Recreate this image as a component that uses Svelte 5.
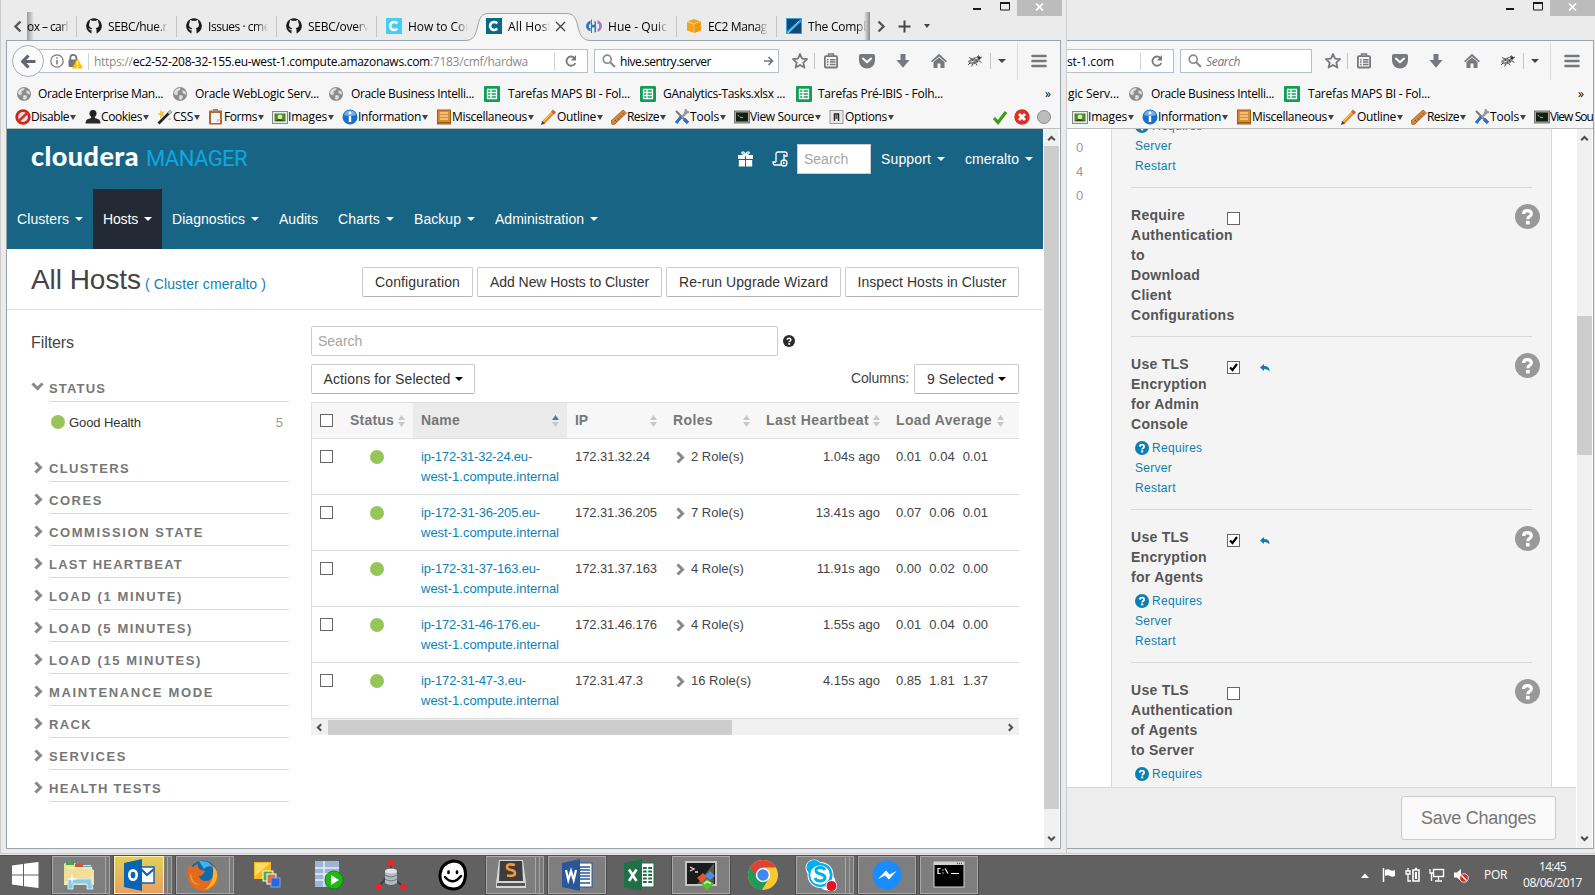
<script>
  // Spreads a label's letters so that it fills the given width in pixels.
  function fit(node, width) {
    const natural = node.getBoundingClientRect().width;
    const count = Math.max(1, node.textContent.length);
    node.style.letterSpacing = (width - natural) / count + 'px';
  }

  const tabs = [
    { icon: 'github', label: 'SEBC/hue.r', w: 59 },
    { icon: 'github', label: 'Issues · cme', w: 62 },
    { icon: 'github', label: 'SEBC/overv', w: 61 },
    { icon: 'cyan', label: 'How to Cor', w: 62 },
    { icon: 'teal', label: 'All Host', w: 44, active: true },
    { icon: 'hue', label: 'Hue - Quic', w: 59 },
    { icon: 'ec2', label: 'EC2 Manag', w: 59 },
    { icon: 'compl', label: 'The Compl', w: 58 }
  ];

  const bookmarks = [
    { icon: 'globe', label: 'Oracle Enterprise Man...', w: 125, gap: 6 },
    { icon: 'globe', label: 'Oracle WebLogic Serv...', w: 124, gap: 7 },
    { icon: 'globe', label: 'Oracle Business Intelli...', w: 123, gap: 7 },
    { icon: 'sheet', label: 'Tarefas MAPS BI - Fol...', w: 122, gap: 8 },
    { icon: 'sheet', label: 'GAnalytics-Tasks.xlsx ...', w: 122, gap: 7 },
    { icon: 'sheet', label: 'Tarefas Pré-IBIS - Folh...', w: 125, gap: 6 }
  ];

  const tools = [
    { icon: 'disable', label: 'Disable', w: 38, slot: 70 },
    { icon: 'cookies', label: 'Cookies', w: 41, slot: 72 },
    { icon: 'css', label: 'CSS', w: 20, slot: 51 },
    { icon: 'forms', label: 'Forms', w: 33, slot: 64 },
    { icon: 'images', label: 'Images', w: 39, slot: 70 },
    { icon: 'info', label: 'Information', w: 63, slot: 94 },
    { icon: 'misc', label: 'Miscellaneous', w: 75, slot: 105 },
    { icon: 'outline', label: 'Outline', w: 39, slot: 70 },
    { icon: 'resize', label: 'Resize', w: 32, slot: 63 },
    { icon: 'tools', label: 'Tools', w: 29, slot: 60 },
    { icon: 'source', label: 'View Source', w: 64, slot: 95 },
    { icon: 'options', label: 'Options', w: 42, slot: 74 }
  ];

  const menu = [
    { label: 'Clusters', w: 52, slot: 86, caret: true },
    { label: 'Hosts', w: 35, slot: 69, caret: true, active: true },
    { label: 'Diagnostics', w: 73, slot: 107, caret: true },
    { label: 'Audits', w: 39, slot: 59 },
    { label: 'Charts', w: 42, slot: 76, caret: true },
    { label: 'Backup', w: 47, slot: 81, caret: true },
    { label: 'Administration', w: 89, slot: 123, caret: true }
  ];

  const actions = [
    { label: 'Configuration', w: 85, slot: 111 },
    { label: 'Add New Hosts to Cluster', w: 159, slot: 185 },
    { label: 'Re-run Upgrade Wizard', w: 149, slot: 175 },
    { label: 'Inspect Hosts in Cluster', w: 149, slot: 174 }
  ];

  const filters = [
    ['CLUSTERS', 81], ['CORES', 54], ['COMMISSION STATE', 155], ['LAST HEARTBEAT', 134],
    ['LOAD (1 MINUTE)', 134], ['LOAD (5 MINUTES)', 144], ['LOAD (15 MINUTES)', 153],
    ['MAINTENANCE MODE', 165], ['RACK', 43], ['SERVICES', 78], ['HEALTH TESTS', 113]
  ];

  const hosts = [
    { name: 'ip-172-31-32-24.eu-', w: 111, ip: '172.31.32.24', ipw: 75, roles: '2 Role(s)', beat: '1.04s ago', load: ['0.01', '0.04', '0.01'] },
    { name: 'ip-172-31-36-205.eu-', w: 119, ip: '172.31.36.205', ipw: 82, roles: '7 Role(s)', beat: '13.41s ago', load: ['0.07', '0.06', '0.01'] },
    { name: 'ip-172-31-37-163.eu-', w: 119, ip: '172.31.37.163', ipw: 82, roles: '4 Role(s)', beat: '11.91s ago', load: ['0.00', '0.02', '0.00'] },
    { name: 'ip-172-31-46-176.eu-', w: 119, ip: '172.31.46.176', ipw: 82, roles: '4 Role(s)', beat: '1.55s ago', load: ['0.01', '0.04', '0.00'] },
    { name: 'ip-172-31-47-3.eu-', w: 105, ip: '172.31.47.3', ipw: 68, roles: '16 Role(s)', beat: '4.15s ago', load: ['0.85', '1.81', '1.37'] }
  ];

  const settings = [
    { lines: ['Require', 'Authentication', 'to', 'Download', 'Client', 'Configurations'], on: false, restart: false },
    { lines: ['Use TLS', 'Encryption', 'for Admin', 'Console'], on: true, restart: true },
    { lines: ['Use TLS', 'Encryption', 'for Agents'], on: true, restart: true },
    { lines: ['Use TLS', 'Authentication', 'of Agents', 'to Server'], on: false, restart: true }
  ];

  const apps = [
    { icon: 'explorer', frame: true, stack: 1 },
    { icon: 'outlook', frame: true, stack: 2, gold: true },
    { icon: 'firefox', frame: true, stack: 1 },
    { icon: 'squares' }, { icon: 'table' }, { icon: 'cluster' }, { icon: 'smile' },
    { icon: 'sublime', frame: true, stack: 2 },
    { icon: 'word', frame: true }, { icon: 'excel' },
    { icon: 'putty', frame: true }, { icon: 'chrome' },
    { icon: 'skype', frame: true, stack: 2 },
    { icon: 'messenger', frame: true },
    { icon: 'cmd', frame: true }
  ];
</script>

{#snippet controls()}
  <div class="controls">
    <svg width="45" height="16" viewBox="0 0 45 16"><path d="M1 9h8" stroke="#1a1a1a" stroke-width="2" /><path d="M28.500 3h9v7h-9z" fill="none" stroke="#1a1a1a" /><path d="M28 3h10" stroke="#1a1a1a" stroke-width="2" /></svg>
    <span class="close"><svg width="9" height="8" viewBox="0 0 9 8"><path d="M1 .5l7 7M8 .5l-7 7" stroke="#fff" stroke-width="1.700" /></svg></span>
  </div>
{/snippet}

{#snippet reload()}
  <svg width="14" height="14" viewBox="0 0 14 14"><path d="M10.500 4A4.600 4.600 0 1 0 11.300 9" fill="none" stroke="#77797c" stroke-width="1.800" /><path d="M12 1v5.500H6.800z" fill="#77797c" /></svg>
{/snippet}

{#snippet glass()}
  <svg width="14" height="14" viewBox="0 0 14 14"><circle cx="5.200" cy="5.200" r="4" fill="none" stroke="#8d8d8d" stroke-width="1.700" /><path d="M8.200 8.200l4.800 4.800" stroke="#8d8d8d" stroke-width="2.200" /></svg>
{/snippet}

{#snippet navicons()}
  <div class="navicons">
    <span style="width:28px"><svg width="18" height="18" viewBox="0 0 18 18"><path d="M9 2l2.100 4.700 5 .5-3.800 3.400 1.100 5L9 13l-4.400 2.600 1.100-5L1.900 7.200l5-.5z" fill="none" stroke="#75787c" stroke-width="1.800" stroke-linejoin="round" /></svg></span>
    <i class="bar"></i>
    <span class="clip"><svg width="16" height="16" viewBox="0 0 16 16"><rect x="1.900" y="3.200" width="12.200" height="11.300" rx="1" fill="none" stroke="#75787c" stroke-width="1.800" /><path d="M5.500 3V1h5v2M4 6.700h1.500M7 6.700h5.500M4 9h1.500M7 9h5.500M4 11.500h1.500M7 11.500h5.500" fill="none" stroke="#75787c" stroke-width="1.400" /></svg></span>
    <span style="width:38px"><svg width="18" height="16" viewBox="0 0 18 16"><path d="M3 1h12q2 0 2 2v4.500a8 8 0 0 1-16 0V3q0-2 2-2z" fill="#75787c" /><path d="M5 5.500l4 3.800 4-3.800" fill="none" stroke="#fff" stroke-width="2" stroke-linecap="round" stroke-linejoin="round" /></svg></span>
    <span style="width:34px"><svg width="16" height="16" viewBox="0 0 16 16"><path d="M5.500 1h5v6h4L8 14.800 1.500 7h4z" fill="#75787c" /></svg></span>
    <span style="width:38px"><svg width="16" height="16" viewBox="0 0 16 16"><path d="M0 8.300L8 .8l8 7.500-1.200 1L8 3.500 1.200 9.300z" fill="#75787c" /><path d="M2.500 9L8 4.500 13.500 9v6H9.500v-4.500h-3V15h-4z" fill="#75787c" /></svg></span>
    <span style="width:32px"><svg width="17" height="14" viewBox="0 0 17 14"><path d="M2 7l3-2 3-1.500 4-1 3 1-1 2-2 3-3 1.500-3 .5-3-1z" fill="#8a8a8a" /><path d="M3 3.500l4 2M8.500 4l3 4M6 5.500l3 4M11 3l2-1.500M14 4l2-1M13 7l2.500 1.500M4 9l-2 2M7 10l-1.500 2.500M10 9.500l1 2" stroke="#333" stroke-width=".8" /><path d="M9 5l3-1M5 8l3-1" stroke="#eee" /><circle cx="13" cy="3.800" r="1.500" fill="#333" /></svg></span>
    <i class="bar"></i>
    <span class="drop"><b class="tri"></b></span>
    <i class="bar tall"></i>
    <span style="width:42px"><svg width="16" height="14" viewBox="0 0 16 14"><path d="M1.500 2h13M1.500 7h13M1.500 12h13" stroke="#75787c" stroke-width="2.600" stroke-linecap="round" /></svg></span>
  </div>
{/snippet}

{#snippet small(name)}
  <svg width="16" height="16" viewBox="0 0 16 16">
    {#if name === 'github'}
      <path d="M8 .2A7.800 7.800 0 0 0 5.500 15.400V12.300C3.300 12.500 3.500 11 2.300 10.200 3.800 9.900 4.200 11.600 5.600 11.200 5.700 10.600 6 10.300 6.200 10.100 4 9.800 3 8.700 3 6.400 3 5.500 3.400 4.700 3.900 4.200 3.700 3.400 3.800 2.600 4.100 2 5 2.100 5.700 2.500 6.300 2.900 7.400 2.700 8.600 2.700 9.700 2.900 10.300 2.500 11 2.100 11.900 2 12.200 2.600 12.300 3.400 12.100 4.200 12.600 4.700 13 5.500 13 6.400 13 8.700 12 9.800 9.800 10.100 10.400 10.600 10.500 11.300 10.500 12V15.400A7.800 7.800 0 0 0 8 .2z" fill="#1b1b1b" />
    {:else if name === 'cyan' || name === 'teal'}
      <rect width="16" height="16" fill={name === 'cyan' ? '#45cdf8' : '#056a86'} /><path d="M11.200 5.500A4 4 0 1 0 11.200 10.500" fill="none" stroke="#fff" stroke-width="2.600" />
    {:else if name === 'hue'}
      <path d="M4.500 2.500Q0 4.500 0 8t4.500 5.500V10H3V6.500h1.500zM6 1.500v5.200h2.500V2.500L10 4v10l-1.500.5V9.500H6V15H5V1.500z" fill="#2c7bbf" /><path d="M11.500 2q4.500 2 4.500 6t-4.500 6v-3.500H13V6h-1.500z" fill="#9b7fc0" />
    {:else if name === 'ec2'}
      <path d="M1 3.500L8 1l7 2.500v9L8 15l-7-2.500z" fill="#f6a41c" /><path d="M1 3.500L8 6l7-2.500M8 6v9" stroke="#ffe0a0" fill="none" /><path d="M8 6l7-2.500v9L8 15z" fill="#e08d0b" opacity=".5" />
    {:else if name === 'compl'}
      <rect width="16" height="16" fill="#3aa0d8" /><path d="M1 1h14L1 13z" fill="#0b4a7b" /><path d="M15 4v11H3z" fill="#0b4a7b" /><path d="M2 15L13 3" stroke="#8fd2f4" />
    {:else if name === 'globe'}
      <circle cx="8" cy="8" r="7" fill="#8d8d8d" /><path d="M3.500 3.500Q6 1.500 8.500 2L8 4 5.500 5.500 6 8 4 9.500 2 7.500q0-2 1.500-4zM7.500 9l3 .5.5 2-2 2.500-2-1zM10.500 4l3 1.500.5 3-2-.5-1.500-1.500z" fill="#dedede" />
    {:else if name === 'sheet'}
      <rect width="16" height="16" rx="1.300" fill="#0f9d58" /><path d="M3.500 3.500h9v9h-9zM3.500 6.500h9M3.500 9.500h9M7 3.500v9" fill="none" stroke="#fff" stroke-width="1.300" />
    {:else if name === 'disable'}
      <circle cx="8" cy="8" r="6.300" fill="#f3e5e3" stroke="#c62a1b" stroke-width="2.800" /><path d="M3.500 12.300l9-8.600" stroke="#d5382a" stroke-width="2.800" />
    {:else if name === 'cookies'}
      <circle cx="8" cy="4.500" r="3.500" fill="#222" /><path d="M6 7h4v2l4 1.500q1.500 1 1.500 4H.5q0-3 1.500-4L6 9z" fill="#2a2a2a" />
    {:else if name === 'css'}
      <path d="M1.500 14.500L14 2" stroke="#222" stroke-width="2.600" /><path d="M11.500 4.500L14 2" stroke="#ccc" stroke-width="2" /><path d="M4 0l1 3 3-1-2 3 2 2-3 0-2 3 0-4-3-1 3-1z" fill="#f4c430" /><path d="M13 8l1 3-3 0z" fill="#f4c430" />
    {:else if name === 'forms'}
      <rect x="1" y="1.500" width="13" height="14" rx="1" fill="#b2652c" /><path d="M3 4h9v10H3z" fill="#f4f4f4" /><rect x="5" y="0" width="5" height="3.500" fill="#888" /><path d="M9 14v-4h4" fill="#ccc" />
    {:else if name === 'images'}
      <rect x=".5" y="2.500" width="15" height="12" fill="#eee" stroke="#888" /><rect x="2.500" y="4.500" width="11" height="8" fill="#4e8c2b" /><circle cx="8" cy="8" r="2.400" fill="#dfe8b0" /><path d="M3 12l4-2 6 2z" fill="#274d16" />
    {:else if name === 'info'}
      <circle cx="8" cy="8" r="7.500" fill="#1f6fc4" /><path d="M2 6a6.300 6.300 0 0 1 12 0q-6 2-12 0z" fill="#6fb0ec" /><path d="M8 7v6" stroke="#fff" stroke-width="2.400" /><circle cx="8" cy="4" r="1.400" fill="#fff" />
    {:else if name === 'misc'}
      <rect x="1.500" y="1" width="13" height="14" fill="#d98b34" stroke="#9a5a17" /><path d="M4 4h8M4 7h8M4 10h8" stroke="#f7d08c" stroke-width="1.500" /><path d="M2 13.500h12" stroke="#9a5a17" />
    {:else if name === 'outline'}
      <path d="M2 14L12.500 3" stroke="#e88a22" stroke-width="3.600" /><path d="M2.500 12.500L11 3.500" stroke="#ffd27a" /><path d="M11.500 4l2-2.200" stroke="#e05a4e" stroke-width="4" /><path d="M0 16l1-4 3 2.500z" fill="#444" />
    {:else if name === 'resize'}
      <path d="M1 15.500L0 12 12 1l3.500 3L4 15z" fill="#d4883f" stroke="#a05c1e" stroke-width=".8" /><path d="M4 11l1.500 1.500M6.500 9L8 10.500M9 6.500L10.500 8M11.500 4L13 5.500" stroke="#7a4312" />
    {:else if name === 'tools'}
      <path d="M2 2l9 9" stroke="#777" stroke-width="2" /><path d="M14 2L7 9" stroke="#999" stroke-width="2.400" /><path d="M7 8l-5 6" stroke="#2d6fc2" stroke-width="3" /><path d="M10 10l4 4" stroke="#2d6fc2" stroke-width="3.400" /><path d="M12 0l-1 4 4-1" fill="none" stroke="#999" stroke-width="2" />
    {:else if name === 'source'}
      <rect x=".5" y="2" width="15" height="12" fill="#aaa" stroke="#777" /><rect x="2" y="3.500" width="12" height="9" fill="#12210f" /><path d="M3.500 6l2 1.500M6 8.500h3" stroke="#6c6" fill="none" />
    {:else if name === 'options'}
      <rect x="1" y="1.500" width="13" height="13" fill="#e8e8e8" stroke="#999" /><path d="M5.500 12V5h4v7" fill="#fff" stroke="#222" stroke-width="1.500" /><path d="M7.500 5v5" stroke="#555" stroke-width="2" />
    {/if}
  </svg>
{/snippet}

{#snippet bookmarkRow(list)}
  {#each list as b}
    <div class="bookmark">{@render small(b.icon)}<span class="ui" style="margin-left:{b.gap}px" use:fit={b.w}>{b.label}</span></div>
  {/each}
{/snippet}

{#snippet toolRow(list)}
  {#each list as t}
    <div class="tool" style="width:{t.slot}px">{@render small(t.icon)}<span class="ui" use:fit={t.w}>{t.label}</span><b class="tri dark"></b></div>
  {/each}
{/snippet}

{#snippet arrow(dir)}
  <svg class="arrow" width="9" height="9" viewBox="0 0 9 9"><path d="M1.200 6.200l3.300-3.300 3.300 3.300" fill="none" stroke="#505050" stroke-width="2.100" transform="rotate({dir} 4.500 4.500)" /></svg>
{/snippet}

{#snippet chevron()}
  <svg width="9" height="13" viewBox="0 0 9 13"><path d="M1.500 1.500L6.500 6.500 1.500 11.500" fill="none" stroke="#888" stroke-width="3" /></svg>
{/snippet}

{#snippet sort(up)}
  <svg class="sort" width="7" height="12" viewBox="0 0 7 12"><path d="M0 5L3.500 0 7 5z" fill={up ? '#5f7890' : '#c8c8c8'} /><path d="M0 7L3.500 12 7 7z" fill="#c8c8c8" /></svg>
{/snippet}

{#snippet question(size, color)}
  <svg width={size} height={size} viewBox="0 0 24 24"><circle cx="12" cy="12" r="12" fill={color} /><path d="M8.200 9.600Q8.400 6.300 12 6.300T15.700 9.400Q15.700 11.200 13.800 12.200 12.300 13 12.300 14.600" fill="none" stroke="#fff" stroke-width="3" /><rect x="10.500" y="16.200" width="3.600" height="3.400" fill="#fff" /></svg>
{/snippet}

{#snippet taskIcon(name)}
  <svg width="32" height="32" viewBox="0 0 32 32">
    {#if name === 'explorer'}
      <path d="M2 4h10l2 2h14v4l3 1v15H1V5z" fill="#f0dd8e" /><path d="M3 3h8v3H3z" fill="#3aa655" /><path d="M12 5h8v3h-8z" fill="#c8553d" /><path d="M20 7h9v2h-9z" fill="#58a8d8" /><path d="M3 8h26l2 18H1z" fill="#f7e9ae" /><path d="M3 10h25v12H2z" fill="#edd98a" opacity=".6" /><path d="M5 20h23l2 10h-6v-5H10v5H5z" fill="#8cc9e6" stroke="#cbe9f7" /><path d="M9 14l1 5 5 1-5 1-1 5-1-5-4-1 4-1z" fill="#fff" opacity=".8" />
    {:else if name === 'outlook'}
      <rect x="17" y="8" width="14" height="16" fill="#fff" stroke="#0a64b4" stroke-width="1.500" /><path d="M18 10l6 6 7-6" fill="none" stroke="#0a64b4" stroke-width="2.200" /><path d="M1 4l18-4v32L1 28z" fill="#0a64b4" /><ellipse cx="10" cy="16" rx="3.700" ry="4.700" fill="none" stroke="#fff" stroke-width="2.700" />
    {:else if name === 'firefox'}
      <circle cx="16" cy="16" r="14.500" fill="#0e6bb0" /><path d="M12 2q10-1 14 6-6-2-9 2z" fill="#3fb4e8" /><path d="M3 6q1 2 3 2 3-3 5-3-1 4 3 6l4 1q-2 5-6 5 1 5 7 5 7 0 7-8 1-5-3-9 8 4 8 12A15 15 0 0 1 1 17Q0 10 3 6z" fill="#e66a1c" /><path d="M26 7q5 5 4 12-3 10-13 12Q28 24 26 7z" fill="#f7b32d" /><path d="M4 14q0 9 9 12-9 0-10-9z" fill="#f59d2c" />
    {:else if name === 'squares'}
      <rect x="3" y="3" width="17" height="17" fill="#f9b81c" /><path d="M4 4h15L4 17z" fill="#fddc67" /><rect x="12" y="12" width="10" height="10" fill="#3fb34f" stroke="#fff" /><rect x="16" y="15" width="9" height="10" fill="#ee6a2a" stroke="#fff" /><rect x="20" y="19" width="9" height="9" fill="#2b67dc" stroke="#7aa7f2" />
    {:else if name === 'table'}
      <rect x="2" y="2" width="24" height="26" fill="#9db4d4" /><path d="M2 9h24M2 15h24M2 21h24M11 2v26" stroke="#e5edf8" stroke-width="1.500" /><circle cx="21" cy="21" r="9" fill="#1fb814" stroke="#0c8a08" /><path d="M18 16l8 5-8 5z" fill="#fff" />
    {:else if name === 'cluster'}
      <path d="M16 4v10L3 28M16 18l13 10" stroke="#3b3f46" stroke-width="2" fill="none" /><path d="M10 12v12q6 4 12 0V12z" fill="#b4bcc5" /><ellipse cx="16" cy="12" rx="6" ry="2.400" fill="#dfe5ea" /><path d="M10 16q6 4 12 0M10 20q6 4 12 0" stroke="#6c7680" fill="none" /><circle cx="16" cy="4" r="3.500" fill="#e8262a" /><circle cx="3.500" cy="28" r="3.200" fill="#e8262a" /><circle cx="28.500" cy="28" r="3.200" fill="#e8262a" />
    {:else if name === 'smile'}
      <path d="M16 2q12 0 12.500 13Q28 30 16 30 3 29 3 16 4 4 16 2z" fill="#fff" stroke="#000" stroke-width="3" /><path d="M11.500 12.500v1.500M20 12.500v1.500" stroke="#000" stroke-width="2.600" stroke-linecap="round" /><path d="M8 18q8 9 16-1" fill="none" stroke="#000" stroke-width="2.500" stroke-linecap="round" />
    {:else if name === 'sublime'}
      <path d="M1 24L4 1h24l3 23v5H1z" fill="#d6d6d6" /><path d="M4 22L5 2h22l1 20z" fill="#3d3d3d" /><path d="M2 24h28v3H2z" fill="#555" /><path d="M20 6q-8-2-8 2 0 2.500 4 3t4 3.500q0 3-8 2" fill="none" stroke="#f59a3c" stroke-width="2.600" />
    {:else if name === 'word' || name === 'excel'}
      <rect x="16" y="4" width="15" height="24" fill="#fff" stroke={name === 'word' ? '#2b579a' : '#1e7145'} />
      {#if name === 'word'}
        <path d="M19 8h10M19 11h10M19 14h10M19 17h10M19 20h10M19 24h10" stroke="#2b579a" stroke-width="1.500" />
      {:else}
        <path d="M20 9h9M20 12.500h9M20 16h9M20 19.500h9M20 23h9" stroke="#1e7145" stroke-width="2.200" /><path d="M24.500 6v20" stroke="#fff" stroke-width="1.500" />
      {/if}
      <path d="M1 4l18-4v32L1 28z" fill={name === 'word' ? '#2b579a' : '#1e7145'} />
      {#if name === 'word'}
        <path d="M5 11l2.300 10L10 12l2.700 9L15 11" fill="none" stroke="#fff" stroke-width="2.200" />
      {:else}
        <path d="M6 10.500l7.500 11.500M13.500 10.500L6 22" stroke="#fff" stroke-width="2.600" />
      {/if}
    {:else if name === 'putty'}
      <rect x="1" y="3" width="30" height="23" fill="#1b1b1b" stroke="#c5c5c5" stroke-width="2" /><path d="M12 25L29 4v21z" fill="#555" /><path d="M5 8l4 2-4 2M10 13h3" stroke="#ddd" fill="none" stroke-width="1.300" /><path d="M12 19l6-5 4 4-5 6z" fill="#e8552a" /><path d="M20 17l5-5 5 5-5 4z" fill="#4a8fe0" /><path d="M16 25l6-5 7 5-7 6z" fill="#54c22b" /><path d="M19 25l3-2.500 4 2" stroke="#d6f5a8" stroke-width="1.500" fill="none" />
    {:else if name === 'chrome'}
      <circle cx="16" cy="16" r="15" fill="#fbc834" /><path d="M16 16L3 8.500A15 15 0 0 1 29 8.500L16 8.500z" fill="#db4437" /><path d="M3 8.500l7 11L16 16V8.500z" fill="#db4437" /><path d="M3 8.500A15 15 0 0 0 15 31l6.500-11-8 2z" fill="#219a57" /><circle cx="16" cy="16" r="7.200" fill="#fff" /><circle cx="16" cy="16" r="5.700" fill="#4285f4" />
    {:else if name === 'skype'}
      <circle cx="15.500" cy="16" r="13" fill="#fff" /><circle cx="9" cy="9" r="8.500" fill="#fff" /><circle cx="22" cy="23" r="8.500" fill="#fff" /><circle cx="15.500" cy="16" r="12" fill="#00aff0" /><circle cx="9" cy="8.500" r="7.500" fill="#00aff0" /><circle cx="15" cy="16" r="9.800" fill="#fff" /><path d="M20 11q-2-3-5.500-2.500-4 .5-3.500 3.500.5 2 4.500 3t4.500 3.500q-.5 3.500-5 3.500-4 0-5-3" fill="none" stroke="#00aff0" stroke-width="3" /><circle cx="26.500" cy="27" r="5.500" fill="#e81123" stroke="#fff" />
    {:else if name === 'messenger'}
      <circle cx="16" cy="16" r="14.500" fill="#1b8cff" /><path d="M7 20l8-8.500 3.500 4L25.500 12l-7.500 8.500-4-4z" fill="#fff" />
    {:else if name === 'cmd'}
      <rect x="1" y="3" width="30" height="25" fill="#000" stroke="#cfd3d8" /><path d="M1 4.500h30" stroke="#cfd3d8" stroke-width="3" /><path d="M24 4.500h5" stroke="#555" stroke-dasharray="1 1" stroke-width="1.500" /><path d="M7.500 9.500H5v5h2.500M10 10.500v1M10 13.500v1M12 9.500l3 5M18 14.500h8" fill="none" stroke="#fff" stroke-width="1.200" />
    {/if}
  </svg>
{/snippet}

<main>
  <section class="window hosts-window">
    <div class="titlebar">
      <div class="strip">
        <span class="scroll-left"><svg width="9" height="13" viewBox="0 0 9 13"><path d="M7.500 1.500l-5 5 5 5" fill="none" stroke="#555" stroke-width="2.400" /></svg></span>
        <div class="tab first"><div class="label"><span class="ui" use:fit={41}>ox – carl</span></div></div>
        {#each tabs as t}
          <div class="tab" class:active={t.active}>
            {#if t.active}
              <svg class="curve" width="126" height="29" viewBox="0 0 126 29"><path d="M0 28.500C9 28.500 10.500 23 12.500 15 14.500 6 16 1.500 24 1.500H101C109 1.500 111 6 113 15 115 23 117 28.500 126 28.500V29H0z" fill="#f6f6f6" /><path d="M0 28.500C9 28.500 10.500 23 12.500 15 14.500 6 16 1.500 24 1.500H101C109 1.500 111 6 113 15 115 23 117 28.500 126 28.500" fill="none" stroke="#9aa2ab" /></svg>
            {/if}
            {@render small(t.icon)}
            <div class="label" class:short={t.active}><span class="ui" use:fit={t.w}>{t.label}</span></div>
            {#if t.active}<svg class="x" width="11" height="11" viewBox="0 0 11 11"><path d="M1 1l9 9M10 1l-9 9" stroke="#444" stroke-width="1.300" /></svg>{/if}
          </div>
        {/each}
        <div class="tab-end">
          <svg width="9" height="13" viewBox="0 0 9 13"><path d="M1.500 1.500l5 5-5 5" fill="none" stroke="#555" stroke-width="2.400" /></svg>
          <svg class="plus" width="13" height="13" viewBox="0 0 13 13"><path d="M6.500 .5v12M.5 6.500h12" stroke="#444" stroke-width="2" /></svg>
          <b class="tri dark"></b>
        </div>
      </div>
      {@render controls()}
    </div>

    <div class="frame">
      <div class="nav">
        <div class="url">
          <svg class="info" width="14" height="14" viewBox="0 0 14 14"><circle cx="7" cy="7" r="6.200" fill="none" stroke="#777" stroke-width="1.200" /><path d="M7 6v4.500M7 3.300v1.500" stroke="#777" stroke-width="1.500" /></svg>
          <svg class="lock" width="15" height="15" viewBox="0 0 15 15"><path d="M2.300 6V3.800a3 3 0 0 1 6 0V6" fill="none" stroke="#777" stroke-width="1.800" /><rect x=".5" y="5.500" width="9" height="7.500" rx="1" fill="#777" /><path d="M9.500 4L15 14.500H4z" fill="#ffbf00" /><path d="M9.500 7.500v3.500M9.500 12v1.500" stroke="#fff" stroke-width="1.400" /></svg>
          <i class="bar"></i>
          <span class="ui address" use:fit={434}><em>https://</em>ec2-52-208-32-155.eu-west-1.compute.amazonaws.com<em>:7183/cmf/hardwa</em></span>
          <i class="bar"></i>
          <span class="reload">{@render reload()}</span>
        </div>
        <span class="back"><svg width="15" height="15" viewBox="0 0 15 15"><path d="M7.500 1.500L1.800 7.500 7.500 13.500M2 7.500h12.500" fill="none" stroke="#63666a" stroke-width="3.200" /></svg></span>
        <div class="find">
          {@render glass()}
          <span class="ui" use:fit={91}>hive.sentry.server</span>
          <svg class="go" width="10" height="10" viewBox="0 0 10 10"><path d="M0 5h8M4.500 1l4 4-4 4" fill="none" stroke="#777" stroke-width="1.700" /></svg>
        </div>
        {@render navicons()}
      </div>
      <div class="bookmarks">
        {@render bookmarkRow(bookmarks)}
        <span class="ui more">»</span>
      </div>
      <div class="toolbar">
        {@render toolRow(tools)}
        <div class="badges">
          <svg width="16" height="16" viewBox="0 0 16 16"><path d="M2 9l4 4.500L14 3" fill="none" stroke="#3f9b1e" stroke-width="3.200" /></svg>
          <svg width="16" height="16" viewBox="0 0 16 16"><circle cx="8" cy="8" r="7.700" fill="#dd3024" /><path d="M5 5l6 6M11 5l-6 6" stroke="#fff" stroke-width="2.800" /></svg>
          <svg width="16" height="16" viewBox="0 0 16 16"><circle cx="8" cy="8" r="6.500" fill="#bcbcbc" stroke="#8a8a8a" /></svg>
        </div>
      </div>

      <div class="view">
        <div class="page">
          <header>
            <div class="brand">
              <div class="logo"><strong use:fit={108}>cloudera</strong><span use:fit={101}>MANAGER</span></div>
              <div class="account">
                <svg width="15" height="16" viewBox="0 0 15 16"><path d="M0 4h7v4H0zM8 4h7v4H8zM.8 9H7v6.500H.8zM8 9h6.200v6.500H8z" fill="#fff" /><path d="M7.500 4Q3 3 4 1.200 6 0 7.500 4 9 0 11 1.200 12 3 7.500 4" fill="none" stroke="#fff" stroke-width="1.200" /></svg>
                <svg class="scroll" width="16" height="16" viewBox="0 0 16 16"><path d="M4 11V3q0-2 2-2h7q2 0 2 2v2h-3V3M4 11H1q0 3 2 3h6M12 5v5" fill="none" stroke="#fff" stroke-width="1.300" /><circle cx="12" cy="12" r="3" fill="none" stroke="#fff" stroke-width="1.300" /><path d="M11 10.500l2.500 1.500-2.500 1.500z" fill="#fff" /></svg>
                <span class="search-top">Search</span>
                <span class="menu-link"><span use:fit={50}>Support</span><b class="caret"></b></span>
                <span class="menu-link"><span use:fit={54}>cmeralto</span><b class="caret"></b></span>
              </div>
            </div>
            <nav>
              {#each menu as m}
                <a class:active={m.active} style="width:{m.slot}px"><span use:fit={m.w}>{m.label}</span>{#if m.caret}<b class="caret"></b>{/if}</a>
              {/each}
            </nav>
          </header>

          <div class="heading">
            <h1 use:fit={110}>All Hosts</h1>
            <span class="sub" use:fit={121}>( Cluster cmeralto )</span>
            <div class="buttons">
              {#each actions as a}
                <span class="btn" style="width:{a.slot}px"><span use:fit={a.w}>{a.label}</span></span>
              {/each}
            </div>
          </div>

          <div class="body">
            <aside>
              <h2 use:fit={43}>Filters</h2>
              <div class="group open">
                <svg width="13" height="9" viewBox="0 0 13 9"><path d="M1.500 1.500l5 5 5-5" fill="none" stroke="#888" stroke-width="3" /></svg>
                <div class="group-title"><span use:fit={57}>STATUS</span></div>
              </div>
              <div class="health"><i class="dot"></i><span use:fit={72}>Good Health</span><em>5</em></div>
              {#each filters as [label, w]}
                <div class="group">{@render chevron()}<div class="group-title"><span use:fit={w}>{label}</span></div></div>
              {/each}
            </aside>

            <div class="content">
              <div class="search-row"><span class="field">Search</span>{@render question(12, '#2a2a2a')}</div>
              <div class="pickers">
                <span class="btn" style="width:164px"><span use:fit={127}>Actions for Selected</span><b class="caret black"></b></span>
                <span class="columns"><span use:fit={58}>Columns:</span></span>
                <span class="btn" style="width:105px"><span use:fit={67}>9 Selected</span><b class="caret black"></b></span>
              </div>
              <div class="table">
                <div class="row head">
                  <div><i class="box"></i></div>
                  <div class="status"><span use:fit={44}>Status</span>{@render sort()}</div>
                  <div class="sorted"><span use:fit={39}>Name</span>{@render sort(true)}</div>
                  <div><span use:fit={13}>IP</span>{@render sort()}</div>
                  <div><span use:fit={40}>Roles</span>{@render sort()}</div>
                  <div><span use:fit={103}>Last Heartbeat</span>{@render sort()}</div>
                  <div><span use:fit={96}>Load Average</span>{@render sort()}</div>
                </div>
                {#each hosts as h}
                  <div class="row">
                    <div><i class="box"></i></div>
                    <div class="center"><i class="dot"></i></div>
                    <div class="host"><span use:fit={h.w}>{h.name}</span><br /><span use:fit={138}>west-1.compute.internal</span></div>
                    <div><span use:fit={h.ipw}>{h.ip}</span></div>
                    <div class="roles">{@render chevron()}<span>{h.roles}</span></div>
                    <div class="beat">{h.beat}</div>
                    <div class="load">{#each h.load as l}<span>{l}</span>{/each}</div>
                  </div>
                {/each}
              </div>
              <div class="hscroll">{@render arrow(-90)}<i></i><span></span>{@render arrow(90)}</div>
            </div>
          </div>
        </div>
        <div class="vscroll">{@render arrow(0)}<i style="height:663px"></i><span></span>{@render arrow(180)}</div>
      </div>
    </div>
  </section>

  <section class="window config-window">
    <div class="titlebar">{@render controls()}</div>
    <div class="frame">
      <div class="nav">
        <div class="url">
          <span class="ui" use:fit={47}>st-1.com</span>
          <i class="bar"></i>
          <span class="reload">{@render reload()}</span>
        </div>
        <div class="find">{@render glass()}<span class="ui hint" use:fit={34}>Search</span></div>
        {@render navicons()}
      </div>
      <div class="bookmarks"><span class="ui rest" use:fit={51}>gic Serv...</span>{@render bookmarkRow(bookmarks.slice(2, 4))}<span class="ui more">»</span></div>
      <div class="toolbar">{@render toolRow(tools.slice(4, 10))}{@render small('source')}<span class="ui" use:fit={43}>View Sou</span></div>
      <div class="view">
        <div class="page">
          <div class="settings">
            <div class="counts"><span>0</span><span>4</span><span>0</span></div>
            <div class="panel">
              <div class="restart lead"><span>{@render question(14, '#0b7fb0')} Requires</span><span>Server</span><span>Restart</span></div>
              {#each settings as s}
                <div class="setting">
                  <div class="name">
                    {#each s.lines as line}<span>{line}</span>{/each}
                    {#if s.restart}
                      <div class="restart"><span>{@render question(14, '#0b7fb0')} Requires</span>{#if s !== settings[3]}<span>Server</span><span>Restart</span>{/if}</div>
                    {/if}
                  </div>
                  <i class="box">{#if s.on}<svg width="11" height="11" viewBox="0 0 11 11"><path d="M2 5.500L4.500 8 9 2" fill="none" stroke="#000" stroke-width="2.200" /></svg>{/if}</i>
                  {#if s.on}<svg class="undo" width="10" height="8" viewBox="0 0 10 8"><path d="M0 3.500L4 0v2q6 0 5.500 5.500Q8 5 4 5v2z" fill="#0b7fb0" /></svg>{/if}
                  <span class="help">{@render question(25, '#999')}</span>
                </div>
              {/each}
            </div>
          </div>
          <footer><span class="save"><span use:fit={115}>Save Changes</span></span></footer>
        </div>
        <div class="vscroll">{@render arrow(0)}<u></u><i style="height:139px"></i><span></span>{@render arrow(180)}</div>
      </div>
    </div>
  </section>

  <div class="taskbar">
    <span class="start"><svg width="27" height="26" viewBox="0 0 27 26"><path d="M0 3.500L11 2v10.500H0zM12 1.800L26.500 0v12.500H12zM0 13.500h11V24L0 22.500zM12 13.500h14.500V26L12 24.200z" fill="#fff" /></svg></span>
    {#each apps as a}
      <div class="app">
        <span class="face" class:framed={a.frame} class:gold={a.gold}>{@render taskIcon(a.icon)}</span>
        {#each Array(a.stack ?? 0) as _}<i></i>{/each}
      </div>
    {/each}
    <div class="tray">
      <svg class="up" width="8" height="5" viewBox="0 0 8 5"><path d="M0 5l4-4.500L8 5z" fill="#fff" /></svg>
      <svg width="16" height="16" viewBox="0 0 16 16"><path d="M2.500 1v14" stroke="#fff" stroke-width="1.500" /><path d="M4 3q3-1.500 5 0t5 0v6q-3 1.500-5 0t-5 0z" fill="#fff" /></svg>
      <svg width="16" height="16" viewBox="0 0 16 16"><path d="M3 1v3M1 4h4v3H1zM3 7v7h3" fill="none" stroke="#fff" stroke-width="1.300" /><path d="M8 3h6v11H8zM10 1.500h2" fill="none" stroke="#fff" stroke-width="1.600" /><path d="M10 5h2v7h-2z" fill="#fff" /></svg>
      <svg width="16" height="16" viewBox="0 0 16 16"><rect x="4.500" y="2.500" width="10" height="7" fill="none" stroke="#fff" stroke-width="1.400" /><path d="M9.500 10v3M6 14h7M1 2v4h3M2.500 6v8" stroke="#fff" stroke-width="1.300" fill="none" /></svg>
      <svg width="16" height="16" viewBox="0 0 16 16"><path d="M1 5.500h3L8 2v12l-4-3.500H1z" fill="#fff" /><circle cx="11" cy="11" r="4.300" fill="#d8261c" stroke="#fff" stroke-width=".8" /><path d="M8.500 8.500l5 5" stroke="#fff" stroke-width="1.400" /></svg>
      <span class="ui lang" use:fit={23}>POR</span>
      <div class="clock"><span class="ui" use:fit={27}>14:45</span><span class="ui" use:fit={59}>08/06/2017</span></div>
    </div>
  </div>
</main>

<style>
  :global(body) { margin: 0; }
  main { position: relative; width: 1595px; height: 895px; overflow: hidden; background: #ebebeb; font-family: "Liberation Sans", Arial, sans-serif; font-size: 14px; color: #444; }
  svg { display: block; flex: none; }
  em { font-style: normal; }
  .ui { font-family: "Open Sans", "Noto Sans", sans-serif; font-size: 12px; color: #000; line-height: 16px; white-space: pre; display: inline-block; flex: none; }
  .window { position: absolute; top: 0; height: 854px; background: #ebebeb; box-sizing: border-box; border-bottom: 1px solid #ccc; overflow: hidden; }
  .hosts-window { left: 0; width: 1067px; border-left: 1px solid #ccc; border-right: 1px solid #ccc; padding-left: 5px; }
  .config-window { left: 1067px; width: 528px; }

  .titlebar { display: flex; justify-content: space-between; height: 40px; }
  .controls { display: flex; height: 16px; margin-left: auto; }
  .hosts-window .controls { margin-right: 4px; }
  .close { display: flex; align-items: center; justify-content: center; box-sizing: border-box; width: 45px; height: 16px; background: #bcbcbc; padding: 0 0 2px; }
  .strip { display: flex; align-items: flex-end; height: 40px; }
  .scroll-left { width: 21px; height: 28px; display: flex; align-items: center; justify-content: center; box-sizing: border-box; padding-left: 2px; }
  .tab { position: relative; display: flex; align-items: center; box-sizing: border-box; width: 100px; height: 28px; padding-left: 9px; border-left: 1px solid transparent; }
  .tab::before { content: ''; position: absolute; left: -1px; top: 4px; bottom: 3px; border-left: 1px solid #c4c4c4; }
  .tab.active::before, .tab.active + .tab::before, .tab.first::before { display: none; }
  .tab.first { width: 49px; padding-left: 0; overflow: hidden; background: linear-gradient(90deg, #999, #ebebeb 7px); border: 0; }
  .tab.first .label { width: 42px; margin-left: 0; }
  .tab.active { z-index: 2; }
  .tab svg { position: relative; }
  .tab svg.curve { position: absolute; left: -12px; top: 0; }
  .label { display: flex; width: 60px; margin-left: 6px; padding-top: 1px; overflow: hidden; -webkit-mask-image: linear-gradient(90deg, #000 80%, transparent); mask-image: linear-gradient(90deg, #000 80%, transparent); position: relative; }
  .label.short { width: 42px; }
  .x { margin-left: 5px; }
  .tab-end { display: flex; align-items: center; height: 28px; margin-left: -6px; padding-left: 7px; position: relative; background: #ebebeb; }
  .tab-end::before { content: ''; position: absolute; left: -6px; top: 0; width: 6px; height: 28px; background: linear-gradient(270deg, #888, transparent); }
  .plus { margin: 0 13px 0 12px; }

  .frame { display: flex; flex-direction: column; box-sizing: border-box; height: 809px; border: 1px solid #9aa2ab; background: #f6f6f6; }
  .hosts-window .frame { width: 1055px; }
  .config-window .frame { width: 527px; border-left: 0; }
  .nav { display: flex; align-items: center; height: 40px; position: relative; }
  .url, .find { display: flex; align-items: center; box-sizing: border-box; height: 24px; background: #fff; border: 1px solid #b6bfca; flex: none; }
  .url .ui, .find .ui { padding-top: 1px; }
  .url { width: 552px; margin-left: 29px; padding-left: 13px; }
  .lock { margin-left: 4px; }
  .url .bar { margin: 0 0 0 5px; height: 17px; border-left: 1px solid #d2d2d2; }
  .address { margin-left: 5px; color: #000; }
  .address em { color: #8a8a8a; }
  .url .address + .bar { margin-left: 26px; }
  .reload { margin-left: 9px; }
  .back { position: absolute; left: 5px; top: 4px; width: 30px; height: 30px; border: 1px solid #a7afb8; border-radius: 50%; background: #fafafa; display: flex; align-items: center; justify-content: center; }
  .find { width: 185px; margin-left: 6px; padding-left: 7px; }
  .find .ui { margin-left: 4px; }
  .go { margin-left: auto; margin-right: 4px; }
  .config-window .url { width: 107px; margin-left: 0; padding-left: 0; border-left: 0; }
  .config-window .url .bar { margin-left: 26px; }
  .config-window .find { width: 132px; }
  .find .hint { font-style: italic; color: #777; }
  .navicons { display: flex; align-items: center; margin-left: 7px; flex: none; }
  .navicons span { display: flex; align-items: center; justify-content: center; }
  .navicons .clip { box-sizing: border-box; width: 33px; padding-right: 2px; }
  .navicons .drop { box-sizing: border-box; width: 26px; padding-right: 5px; }
  .bar { display: block; flex: none; width: 0; height: 16px; border-left: 1px solid #c4c4c4; }
  .bar.tall { height: 38px; border-color: #dedede; }
  .tri { display: block; border: 4px solid transparent; border-top-color: #444; border-bottom: 0; }
  .tri.dark { border-width: 4px 3.500px 0; }
  .bookmarks { display: flex; align-items: center; height: 25px; padding-left: 9px; overflow: hidden; }
  .bookmark { display: flex; align-items: center; flex: none; width: 156px; }
  .config-window .bookmarks { padding-left: 1px; }
  .rest { margin-right: 9px; }
  .more { margin-left: auto; margin-right: 9px; }
  .toolbar { display: flex; align-items: center; height: 22px; padding-left: 8px; border-bottom: 1px solid #bdbdbd; overflow: hidden; }
  .config-window .toolbar { padding-left: 5px; }
  .tool { display: flex; align-items: center; flex: none; }
  .tool .tri { margin-left: 1px; border-width: 5px 3.500px 0; }
  .badges { display: flex; gap: 6px; margin-left: auto; margin-right: 8px; }
  .view { display: flex; flex: 1; min-height: 0; background: #fff; }
  .page { display: flex; flex-direction: column; flex: 1; min-width: 0; overflow: hidden; }
  .vscroll { display: flex; flex-direction: column; align-items: center; width: 16px; background: #f0f0f0; padding: 5px 0 5px; box-sizing: border-box; border-left: 1px solid #fff; flex: none; margin-right: 1px; }
  .vscroll i { width: 15px; background: #cdcdcd; margin-top: 3px; flex: none; }
  .vscroll span { flex: 1; }
  .vscroll u { height: 170px; flex: none; }

  header { height: 120px; background: #186484; color: #fff; flex: none; }
  .brand { display: flex; height: 60px; }
  .logo { display: flex; align-items: baseline; padding: 10px 0 0 24px; white-space: nowrap; }
  .logo strong { font: 900 27px/34px Lato, sans-serif; }
  .logo span { font: 400 22px/34px Roboto, sans-serif; color: #10a6df; margin-left: 7px; }
  .logo strong, .logo span { display: inline-block; }
  .account { display: flex; align-items: center; margin-left: auto; margin-right: 10px; height: 60px; }
  .scroll { margin: 0 9px 0 19px; }
  .search-top { width: 74px; height: 30px; box-sizing: border-box; border: 1px solid #ccc; background: #fff; color: #a5a5a5; line-height: 28px; padding-left: 6px; }
  .menu-link { display: flex; align-items: center; margin-left: 10px; white-space: nowrap; }
  .menu-link + .menu-link { margin-left: 20px; }
  .caret { display: block; border: 4px solid transparent; border-top-color: #fff; border-bottom: 0; margin-left: 6px; }
  .caret.black { border-top-color: #000; margin-left: 4px; }
  nav { display: flex; height: 60px; }
  nav a { display: flex; align-items: center; box-sizing: border-box; padding-left: 10px; height: 60px; white-space: nowrap; }
  nav a.active { background: #232a34; }
  .heading { display: flex; align-items: center; box-sizing: border-box; height: 61px; border-bottom: 1px solid #ddd; padding-left: 24px; flex: none; white-space: nowrap; }
  h1 { font-size: 28px; font-weight: 400; margin: 0; line-height: 60px; color: #444; padding-top: 2px; }
  .sub { color: #0f7fb5; margin-left: 4px; line-height: 14px; padding-top: 10px; }
  .buttons { display: flex; gap: 4px; margin-left: auto; margin-right: 24px; padding-top: 5px; }
  .btn { display: flex; align-items: center; justify-content: center; box-sizing: border-box; height: 30px; border: 1px solid #ccc; border-bottom-color: #b3b3b3; border-radius: 2px; background: #fff; color: #333; white-space: nowrap; }
  .body { display: flex; }
  aside { width: 258px; padding: 22px 0 0 24px; margin-right: 22px; box-sizing: content-box; }
  h2 { font-size: 16px; font-weight: 400; line-height: 22px; margin: 0 0 27px; display: inline-block; color: #444; }
  .group { display: flex; height: 32px; padding-left: 3px; align-items: flex-start; box-sizing: border-box; }
  .group > svg { margin-top: 11px; }
  .group.open { padding-left: 0; height: 20px; }
  .group.open > svg { margin-top: 1px; }
  .group-title { box-sizing: border-box; width: 240px; height: 32px; padding-top: 11px; border-bottom: 1px solid #d8d8d8; margin-left: 6px; font-weight: bold; font-size: 13px; line-height: 16px; color: #777; white-space: nowrap; }
  .group.open .group-title { margin-left: 5px; height: 21px; padding-top: 0; }
  .health { display: flex; align-items: center; height: 16px; font-size: 13px; padding: 13px 6px 0 20px; margin-bottom: 20px; width: 232px; color: #333; }
  .health em { margin-left: auto; color: #999; }
  .dot { display: block; width: 14px; height: 14px; border-radius: 50%; background: #96c65a; margin-right: 4px; }
  .content { width: 708px; padding-top: 16px; }
  .search-row { display: flex; align-items: center; gap: 5px; }
  .field { width: 467px; height: 30px; box-sizing: border-box; border: 1px solid #ccc; border-radius: 2px; line-height: 28px; padding-left: 6px; color: #a5a5a5; }
  .pickers { display: flex; align-items: center; margin-top: 8px; white-space: nowrap; }
  .columns { margin-left: auto; margin-right: 5px; padding-bottom: 3px; }
  .table { margin-top: 8px; border-left: 1px solid #ddd; border-top: 1px solid #ddd; font-size: 13px; }
  .row { display: grid; grid-template-columns: 28px 73px 154px 98px 93px 130px 131px; height: 56px; box-sizing: border-box; border-bottom: 1px solid #ddd; line-height: 20px; white-space: nowrap; color: #444; }
  .row > div { padding: 8px 8px 0; }
  .row.head { height: 36px; background: #f7f7f7; font-weight: bold; font-size: 14px; color: #777; border-bottom: 1px solid #ddd; }
  .row.head > div { display: flex; justify-content: space-between; align-items: center; padding: 0 8px 0 8px; }
  .row.head > div > span { padding-bottom: 2px; }
  .row.head > div.sorted { background: #ebebeb; }
  .row.head > div.status { padding-left: 10px; }
  .row.head > div:last-child { padding-right: 15px; }
  .box { display: block; width: 11px; height: 11px; border: 1px solid #666; background: #fff; flex: none; }
  .row .box { margin-top: 3px; }
  .row.head .box { margin-top: 0; }
  .row > div.center { padding: 11px 0 0 30px; }
  .host { color: #0f7fb5; }
  .row > .roles { display: flex; padding-left: 11px; }
  .roles svg { margin: 4px 6px 0 0; }
  .row > .beat { text-align: right; }
  .load { display: flex; gap: 8px; }
  .hscroll { display: flex; align-items: center; height: 16px; background: #f0f0f0; padding: 0 4px; }
  .hscroll i { width: 404px; height: 15px; background: #cdcdcd; margin-left: 4px; }
  .hscroll span { flex: 1; }

  .settings { display: flex; height: 658px; overflow: hidden; flex: none; }
  .counts { display: flex; flex-direction: column; width: 44px; padding: 7px 0 0 9px; box-sizing: border-box; font-size: 13px; line-height: 24px; color: #999; }
  .panel { width: 441px; box-sizing: border-box; border: solid #d8d8d8; border-width: 0 1px; background: #f4f4f4; padding: 0 19px; height: 1000px; }
  .restart { display: flex; flex-direction: column; font-weight: normal; font-size: 12px; letter-spacing: .3px; color: #0b7fb0; padding: 4px 0 0 4px; }
  .restart span { display: flex; align-items: center; gap: 3px; height: 20px; }
  .restart.lead { margin-top: -17px; }
  .setting { display: flex; border-top: 1px solid #d8d8d8; padding: 17px 0 11px; margin-top: 0; }
  .restart.lead + .setting { margin-top: 11px; }
  .name { display: flex; flex-direction: column; width: 96px; font-weight: bold; font-size: 14px; line-height: 20px; letter-spacing: .28px; color: #555; white-space: nowrap; }
  .setting .box { margin-top: 7px; }
  .undo { margin: 10px 0 0 20px; }
  .help { margin: -1px -8px 0 auto; }
  footer { flex: 1; background: #ededed; border-top: 1px solid #d8d8d8; display: flex; justify-content: flex-end; }
  .save { display: flex; align-items: center; justify-content: center; box-sizing: border-box; width: 155px; height: 44px; margin: 8px 20px 0 0; border: 1px solid #ccc; border-radius: 3px; background: #f9f9f9; font-size: 18px; color: #777; white-space: nowrap; }

  .taskbar { position: absolute; left: 0; top: 855px; width: 1595px; height: 40px; background: #616161; display: flex; box-shadow: inset 0 1px #4f4f4f; }
  .start { width: 52px; box-sizing: border-box; padding: 7px 0 0 12px; }
  .app { display: flex; width: 62px; height: 39px; padding-top: 1px; flex: none; }
  .face { display: flex; align-items: center; justify-content: center; flex: 1; max-width: 58px; box-sizing: border-box; height: 38px; border: 1px solid transparent; }
  .face.framed { border-color: #a8a8a8; background: #7e7e7e; outline: 1px solid #4b4b4b; outline-offset: 0; }
  .face.gold { background: linear-gradient(#e3cf58, #e8a060); border-color: #fff0b0; }
  .app i { width: 3px; border: solid #a3a3a3; border-width: 1px 1px 1px 0; background: #7a7a7a; height: 36px; }
  .app i:last-child { margin-right: 4px; }
  .tray { display: flex; align-items: center; margin-left: auto; gap: 8px; padding-right: 13px; }
  .tray .up { margin-right: 4px; }
  .tray .ui { color: #fff; line-height: 16px; }
  .tray .ui.lang { margin-left: 7px; }
  .clock { display: flex; flex-direction: column; align-items: center; margin-left: 8px; }
</style>
